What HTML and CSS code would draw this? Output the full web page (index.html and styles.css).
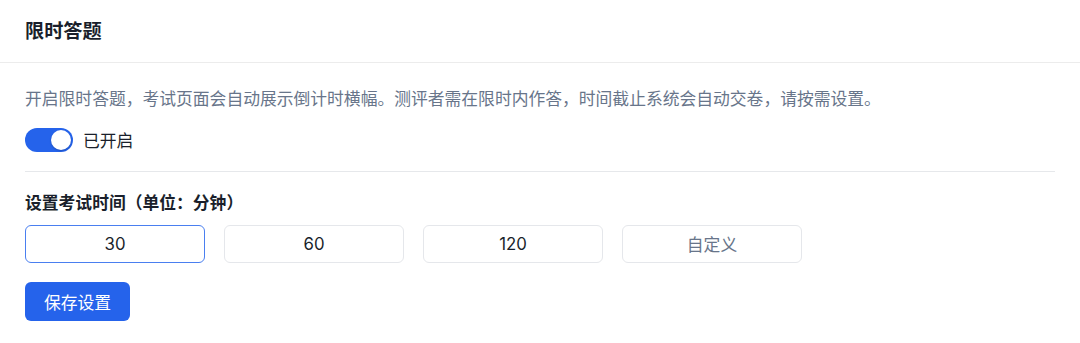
FILE: index.html
```html
<!DOCTYPE html>
<html lang="zh-CN">
<head>
    <meta charset="UTF-8">
    <meta name="viewport" content="width=device-width, initial-scale=1.0">
    <title>限时答题</title>
    <link rel="stylesheet" href="styles.css">
</head>
<body>
    <div class="panel">
        <div class="panel-header">
            <h2>限时答题</h2>
        </div>

        <div class="panel-body">
            <p class="desc">开启限时答题，考试页面会自动展示倒计时横幅。测评者需在限时内作答，时间截止系统会自动交卷，请按需设置。</p>

            <label class="switch-row">
                <span class="switch on"><span class="knob"></span></span>
                <span class="switch-text">已开启</span>
            </label>

            <div class="divider"></div>

            <div class="field-label">设置考试时间（单位：分钟）</div>
            <div class="options">
                <button class="option active">30</button>
                <button class="option">60</button>
                <button class="option">120</button>
                <button class="option custom">自定义</button>
            </div>

            <button class="save-btn">保存设置</button>
        </div>
    </div>
</body>
</html>
```

FILE: styles.css
```css
* {
    margin: 0;
    padding: 0;
    box-sizing: border-box;
    font-family: Inter, "Noto Sans CJK SC", sans-serif;
}

body {
    background: #fff;
    width: 1080px;
    height: 343px;
    overflow: hidden;
}

.panel-header {
    height: 63px;
    padding: 17px 25px 0;
    border-bottom: 1px solid #ececec;
}

.panel-header h2 {
    font-size: 19.2px;
    line-height: 28px;
    font-weight: 700;
    color: #1a1f2b;
}

.panel-body {
    padding: 0 25px;
}

.desc {
    margin-top: 24px;
    font-size: 16.8px;
    line-height: 25px;
    color: #68758a;
}

.switch-row {
    display: flex;
    align-items: center;
    gap: 10px;
    margin-top: 16px;
    height: 24px;
}

.switch {
    display: flex;
    align-items: center;
    justify-content: flex-end;
    width: 48px;
    height: 24px;
    padding: 2px;
    border-radius: 12px;
    background: #2563eb;
}

.knob {
    width: 20px;
    height: 20px;
    border-radius: 50%;
    background: #fff;
    box-shadow: 0 1px 2px rgba(0, 0, 0, 0.2);
}

.switch-text {
    font-size: 16.8px;
    color: #1a1f2b;
}

.divider {
    margin-top: 19px;
    height: 1px;
    background: #e6e8eb;
}

.field-label {
    margin-top: 19px;
    font-size: 16.8px;
    line-height: 25px;
    font-weight: 700;
    color: #1a1f2b;
}

.options {
    display: flex;
    gap: 19px;
    margin-top: 9px;
}

.option {
    width: 180px;
    height: 38px;
    border: 1px solid #e5e7eb;
    border-radius: 6px;
    background: #fff;
    font-size: 16.8px;
    color: #1a1f2b;
    cursor: pointer;
}

.option.active {
    border-color: #4a7ff0;
}

.option.custom {
    color: #68758a;
}

.save-btn {
    display: block;
    margin-top: 19px;
    height: 39px;
    padding: 0 19px;
    border: none;
    border-radius: 6px;
    background: #2563eb;
    color: #fff;
    font-size: 16.8px;
    cursor: pointer;
}
```
